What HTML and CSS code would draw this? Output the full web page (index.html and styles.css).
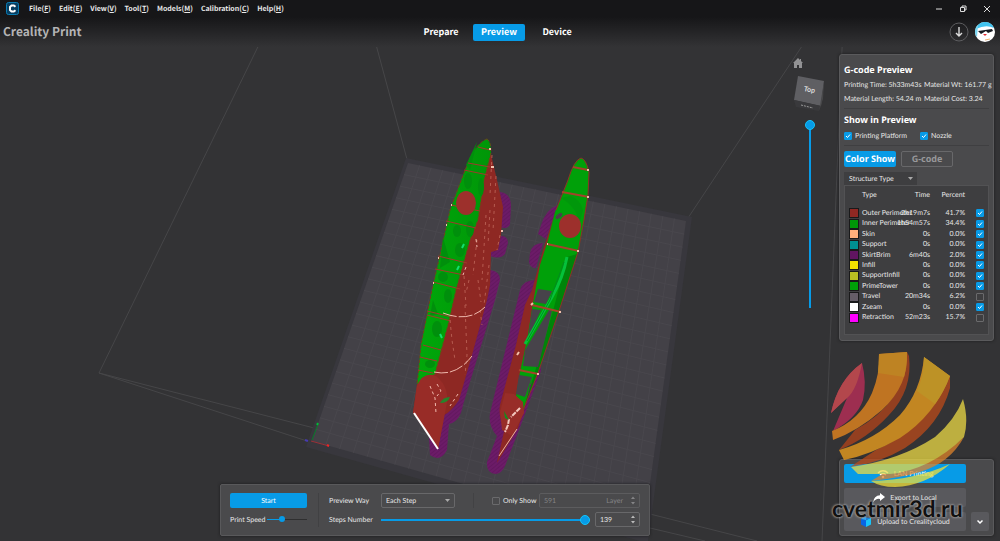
FILE: index.html
```html
<!DOCTYPE html>
<html lang="en">
<head>
<meta charset="utf-8">
<title>Creality Print</title>
<link rel="stylesheet" href="styles.css">
</head>
<body>
<svg class="scene" viewBox="0 0 1000 541" preserveAspectRatio="xMidYMid slice" aria-hidden="true">
  <defs>
    <pattern id="brim" width="3" height="3" patternUnits="userSpaceOnUse" patternTransform="rotate(-40)">
      <rect width="3" height="3" fill="#6c1b68"/><rect width="3" height="1" fill="#63185f"/>
    </pattern>
    <linearGradient id="hullA" x1="0" y1="0" x2="1" y2="0"><stop offset="0" stop-color="#00a80a"/><stop offset="1" stop-color="#009608"/></linearGradient>
  </defs>
  <g fill="none" stroke="#464648">
    <path d="M271 20L99 373L307 441M99 373L318 429M368 15L408 163M816 25L686 221M843 25L822 541M650 514L757 541M650 528L705 541"/>
  </g>
  <path d="M406 158L692 217L648 541H640L306 447Z" fill="#38373d"/>
  <path d="M408 163L686 221L643 535L312 441Z" fill="#434147"/>
  <path id="grid" stroke="#49474d" fill="none"/>
  <path d="M312 440L318 424" stroke="#087b2b"/><path d="M311 441L329 446" stroke="#9b3038"/>
  <path d="M327 445l2 1" stroke="#f02525" stroke-width="2"/><path d="M317 425l1-2" stroke="#00ba37" stroke-width="2"/><path d="M305 440l3 1" stroke="#463ab0" stroke-width="2"/>

  <g fill="url(#brim)">
    <path d="M500 192Q511 193 511 206L510 224Q508 230 500 227ZM496 236Q508 234 508 243L505 254Q500 260 490 256Z"/>
    <path d="M490 270Q500 271 500 280L495 300L463 405Q460 422 449 424L447 450Q440 463 430 455L429 438Z"/>
    <path d="M558 205Q546 209 541 225L538 234L546 239ZM543 243Q532 243 530 253L529 262Q530 268 536 268ZM535 280Q523 280 520 290L490 413Q488 426 497 436L487 462Q486 474 496 474Q502 473 505 466L519 430L541 371Z"/>
  </g>

  <path d="M489 146L497 180L503 207L501 235L498 250L491 252L490 285L487 300L472 355L459 400Q450 413 444 415L438 449L413 413L417 384L435 330Z" fill="#8e2823"/>
  <path d="M487 139Q478 142 470 158L462 178L450 210L440 255L432 290L428 310L421 345L418 376L417 384L435 374L448 325L456 290L470 240L478 220L484 180L491 153Q491 141 487 139Z" fill="url(#hullA)" stroke="#6b4a15" stroke-dasharray="3 2"/>
  <path d="M413 413L417 386Q423 371 436 376Q451 388 446 408L438 449Z" fill="#982c27"/>
  <g fill="#008f0c">
    <ellipse cx="468" cy="181" rx="4" ry="8"/><ellipse cx="481" cy="187" rx="3" ry="9"/><ellipse cx="457" cy="231" rx="4" ry="6"/><ellipse cx="470" cy="229" rx="4" ry="8"/><ellipse cx="460" cy="250" rx="5" ry="7"/><ellipse cx="443" cy="277" rx="5" ry="5"/><ellipse cx="448" cy="296" rx="4" ry="7"/><ellipse cx="437" cy="329" rx="5" ry="8"/><ellipse cx="430" cy="364" rx="5" ry="4"/>
    <path d="M477 142L470 170L466 165ZM443 237L450 262L440 268ZM433 300L438 314L430 316Z"/>
  </g>
  <path d="M478 147l12 3M468 163l22 4M464 170l24 5M451 205l29 6M446 221l30 7M438 256l29 7M435 269l29 6M433 282l27 7M427 311l25 6M427 315l24 6M423 345l18 5M420 357l17 4M418 370l15 3" stroke="#a0392c" fill="none"/>
  <path d="M492 155l-2 40M496 176l-3 55M490 210l-2 35M477 240l-4 35M486 215l-4 65M500 235l-3 15M469 280l-3 13M464 276l2 30M489 265l-5 40M478 280l3 22M450 320l2 20 3 20M465 305l2 50-2 20M480 310l2 15" stroke="#b65b50" stroke-dasharray="3 4" fill="none"/>
  <g fill="none" stroke="#efb9ad">
    <path d="M443 313Q469 323 485 307M434 372Q456 377 472 356" stroke-dasharray="14 2"/>
    <path d="M458 394l-8 12M430 386l5 12 1 15M437 384l4 7-4 5M476 239l1 8M466 267l-3 8" stroke-dasharray="3 3"/>
  </g>
  <path d="M414 413L438 449" stroke="#fff" stroke-width="2"/>
  <path d="M440 403q3-6 10-6q-2 6-10 6" fill="#26842b"/>
  <path d="M462 248l2-4M457 270l2-4M440 334l2 4" stroke="#13df6f" stroke-width="2"/>
  <ellipse cx="466" cy="203" rx="10" ry="12" fill="#9d302c"/>

  <path d="M566 190L557 207L543 250L532 290L525 305L516 345L500 405Q498 418 505 427L497 463L518 428L526 404L538 330L563 230Z" fill="#8e2823"/>
  <path d="M581 158Q574 160 568 180L562 195L555 212L548 240L540 265L533 303L527 340L520 372L516 396L524 409L530 385L538 372L550 335L560 305L567 285L578 252L584 220L588 195L589 172Q586 159 581 158Z" fill="#00a009"/>
  <path d="M567 257L577 254L561 304L538 373L524 408L531 385L553 311Z" fill="#008409"/>
  <path d="M524 408L538 373L561 305L578 252L584 220L588 195L589 172Q586 159 581 158Q574 160 568 180L556 210" fill="none" stroke="#8c3324"/>
  <path d="M538 289L552 291L546 304L534 302ZM532 309L541 310L528 338ZM549 310L552 311L538 367L523 366L525 350ZM519 375L532 377L525 397L516 394Z" fill="#47434a"/>
  <path d="M567 257Q563 278 552 297L525 344" fill="none" stroke="#05c13b" stroke-width="3"/><path d="M564 262L550 300L527 341" fill="none" stroke="#018d20"/>
  <path d="M573 167l15 3M562 192l27 5M547 244l32 7M532 305l29 7M519 370l19 4" stroke="#a3432b" stroke-width="2" fill="none"/>
  <path d="M587 170h2M587 197h2M577 251h2M559 312h2M537 374h2M547 244h1M531 305l2-2M501 231h2M517 355l2-3M489 149h2M491 167h3M451 205h1M446 225h1M438 258h1M433 283h1" stroke="#f2c1ad" stroke-width="2"/>
  <path d="M500 412L505 393L514 394L523 402L524 413L512 436L502 430Z" fill="#982d28"/>
  <path d="M517 429L499 456" stroke="#e9b2a5"/>
  <path d="M520 408l-9 9M509 419l-1 6-3 7" fill="none" stroke="#f3c7bd" stroke-dasharray="5 1" stroke-width="2"/>
  <path d="M504 411l5 9-4-2z" fill="#168b1d"/>
  <path d="M570 196q10 3 13 14l-4 14q-1-16-18-26z" fill="#00970b"/>
  <ellipse cx="559" cy="216" rx="2" ry="4" transform="rotate(50 559 216)" fill="#494348"/>
  <ellipse cx="570" cy="226" rx="11" ry="12" fill="#9d302c"/>
</svg>

<header class="header">
  <div class="menubar">
    <svg class="logo" viewBox="0 0 13 13" aria-hidden="true"><rect x=".5" y=".5" width="12" height="12" rx="2" fill="#063e61" stroke="#0a7db4"/><path d="M9.500 4.800L7.800 3.500H5.500L4 5v3l1.500 1.500h2.300l1.700-1.300" fill="none" stroke="#fff" stroke-width="2"/></svg>
    <nav class="menus">
      <a href="#">File(<u>F</u>)</a><a href="#">Edit(<u>E</u>)</a><a href="#">View(<u>V</u>)</a><a href="#">Tool(<u>T</u>)</a><a href="#">Models(<u>M</u>)</a><a href="#">Calibration(<u>C</u>)</a><a href="#">Help(<u>H</u>)</a>
    </nav>
    <div class="window-buttons">
      <button aria-label="Minimize"><svg viewBox="0 0 8 8"><path d="M1 4h6"/></svg></button>
      <button aria-label="Restore"><svg viewBox="0 0 8 8"><path d="M1.500 2.500h4v4h-4zM3 2V1h4v4H6"/></svg></button>
      <button aria-label="Close"><svg viewBox="0 0 8 8"><path d="M1 1l6 6M7 1L1 7"/></svg></button>
    </div>
  </div>
  <div class="toolbar">
    <h1>Creality Print</h1>
    <nav class="tabs"><button>Prepare</button><button class="active">Preview</button><button>Device</button></nav>
    <div class="account">
      <button class="download" aria-label="Downloads"><svg viewBox="0 0 20 20"><circle cx="10" cy="10" r="9" stroke="#5d5d60"/><path d="M10 5v9M7 11l3 3 3-3" stroke="#ddd" stroke-width="1.400"/></svg></button>
      <button aria-label="Account"><svg viewBox="0 0 20 20"><circle cx="10" cy="10" r="10" fill="#fff"/><path d="M1 7A9.500 9.500 0 0 1 19 6Q11 2 1 7" fill="#42c3ee"/><path d="M0 10Q0 5 3 3L2 15Q0 13 0 10" fill="#79d6f2"/><path d="M3 9l14-2 1 2-5 2-2-2-5 3z" fill="#161a20"/><path d="M8 12h4l-2 2z" fill="#e32a31"/><path d="M10 18l5-1" stroke="#efb273"/></svg></button>
    </div>
  </div>
</header>

<main class="workspace">
  <section class="playback" aria-label="Playback">
    <div class="play-group">
      <button class="primary start">Start</button>
      <div class="speed"><label for="speed">Print Speed</label><input id="speed" class="range small" type="range" value="33"></div>
    </div>
    <div class="step-group">
      <div class="play-row">
        <label class="row-label" for="way">Preview Way</label>
        <select id="way" class="way"><option>Each Step</option></select>
        <span class="separator"></span>
        <label class="check only"><input type="checkbox">Only Show</label>
        <label class="number disabled"><input type="text" value="591" aria-label="Layer number" disabled><span>Layer</span><svg viewBox="0 0 5 10"><path d="M0 3l2.500-3L5 3zM0 7h5l-2.500 3z"/></svg></label>
      </div>
      <div class="play-row">
        <label class="row-label" for="steps">Steps Number</label>
        <input id="steps" class="range steps" type="range" value="100">
        <label class="number count"><input type="text" value="139" aria-label="Step"><svg viewBox="0 0 5 10"><path d="M0 3l2.500-3L5 3zM0 7h5l-2.500 3z"/></svg></label>
      </div>
    </div>
  </section>

  <div class="view-tools">
    <button class="home" aria-label="Home view"><svg viewBox="0 0 10 10"><path d="M5 0L0 5h1v5h3V7h2v3h3V5h1L8 3V1H7v1z" fill="#929294"/></svg></button>
    <svg class="cube" viewBox="0 0 34 38" role="img" aria-label="View cube">
      <path d="M5 2L31 7L28 32L1 26Z" fill="#5f5f63"/><path d="M1 26L28 32L26 37L3 33Z" fill="#39393c"/><path d="M31 7L27 32L26 37L30 25Z" fill="#474749"/>
      <text x="16" y="18" transform="rotate(10 16 18)">Top</text><path d="M8 31l12 3" stroke="#999" stroke-dasharray="2 1"/>
    </svg>
    <input class="layer-range" type="range" value="100" aria-label="Layer">
  </div>

  <aside class="sidebar">
    <section class="panel info">
      <div class="block">
        <h2>G-code Preview</h2>
        <div class="facts"><div>Printing Time: 5h33m43s</div><div>Material Wt: 161.77 g</div><div>Material Length: 54.24 m</div><div>Material Cost: 3.24</div></div>
      </div>
      <div class="block show">
        <h2>Show in Preview</h2>
        <div class="options"><label class="check"><input type="checkbox" checked>Printing Platform</label><label class="check"><input type="checkbox" checked>Nozzle</label></div>
      </div>
      <div class="modes"><button class="primary">Color Show</button><button class="outline">G-code</button></div>
      <select class="structure" aria-label="Color by"><option>Structure Type</option></select>
      <div class="legend">
        <table>
          <thead><tr><th class="c-swatch"></th><th class="c-type">Type</th><th class="c-time">Time</th><th class="c-percent">Percent</th><th></th></tr></thead>
          <tbody>
            <tr><td><i class="swatch outer"></i></td><td>Outer Perimeter</td><td>2h19m7s</td><td>41.7%</td><td><input type="checkbox" aria-label="Outer Perimeter" checked></td></tr>
            <tr><td><i class="swatch inner"></i></td><td>Inner Perimeter</td><td>1h54m57s</td><td>34.4%</td><td><input type="checkbox" aria-label="Inner Perimeter" checked></td></tr>
            <tr><td><i class="swatch skin"></i></td><td>Skin</td><td>0s</td><td>0.0%</td><td><input type="checkbox" aria-label="Skin" checked></td></tr>
            <tr><td><i class="swatch support"></i></td><td>Support</td><td>0s</td><td>0.0%</td><td><input type="checkbox" aria-label="Support" checked></td></tr>
            <tr><td><i class="swatch brim"></i></td><td>SkirtBrim</td><td>6m40s</td><td>2.0%</td><td><input type="checkbox" aria-label="SkirtBrim" checked></td></tr>
            <tr><td><i class="swatch infill"></i></td><td>Infill</td><td>0s</td><td>0.0%</td><td><input type="checkbox" aria-label="Infill" checked></td></tr>
            <tr><td><i class="swatch support-infill"></i></td><td>SupportInfill</td><td>0s</td><td>0.0%</td><td><input type="checkbox" aria-label="SupportInfill" checked></td></tr>
            <tr><td><i class="swatch tower"></i></td><td>PrimeTower</td><td>0s</td><td>0.0%</td><td><input type="checkbox" aria-label="PrimeTower" checked></td></tr>
            <tr><td><i class="swatch travel"></i></td><td>Travel</td><td>20m34s</td><td>6.2%</td><td><input type="checkbox" aria-label="Travel"></td></tr>
            <tr><td><i class="swatch zseam"></i></td><td>Zseam</td><td>0s</td><td>0.0%</td><td><input type="checkbox" aria-label="Zseam" checked></td></tr>
            <tr><td><i class="swatch retraction"></i></td><td>Retraction</td><td>52m23s</td><td>15.7%</td><td><input type="checkbox" aria-label="Retraction"></td></tr>
          </tbody>
        </table>
      </div>
    </section>

    <section class="panel actions">
      <div class="action-list">
        <button class="primary"><svg class="wifi" viewBox="0 0 12 9"><path d="M1 3.500Q6-1 11 3.500M3 5.500q3-2.500 6 0" fill="none" stroke="#fff" stroke-width="1.500"/><circle cx="6" cy="7.500" r="1.300" fill="#fff"/></svg>LAN Printing</button>
        <button><svg viewBox="0 0 12 10"><path d="M7 0l5 4-5 4V6Q3 5 0 9.500Q1 2.500 7 2.300Z" fill="#fff"/></svg>Export to Local</button>
        <button><svg viewBox="0 0 12 12"><path d="M0 2l6 2v8L0 9z" fill="#0865e5"/><path d="M6 4l6-3v8l-6 3z" fill="#18c4fa"/><path d="M0 2l5-2 2 1-1 3z" fill="#28a5fb"/><path d="M7 1l5 0-6 3z" fill="#1380ec"/></svg>Upload to Crealitycloud</button>
      </div>
      <button class="more" aria-label="More"><svg viewBox="0 0 6 6"><path d="M.5 1.500L3 4l2.500-2.500" fill="none" stroke="#fff" stroke-width="1.500"/></svg></button>
    </section>

    <div class="watermark">
      <svg viewBox="830 350 138 140" aria-hidden="true">
        <path d="M862 363Q838 380 831 413L847 398L833 431Q857 418 863 400Q867 382 862 363Z" fill="#c22d5a"/><path d="M862 363Q838 380 831 413L847 398Q857 390 862 363Z" fill="#e04e54"/>
        <path d="M907 352L909 356Q913 390 889 415Q867 439 839 450L855 430Q906 402 907 352Z" fill="#b5441a"/>
        <path d="M879 354L907 352Q909 385 882 410Q858 431 833 440L832 431Q860 420 872 393Q880 374 879 354Z" fill="#f08b1c"/><path d="M879 354L907 352Q907 366 904 377L878 373Z" fill="#efa01d"/>
        <path d="M950 376V388Q940 425 905 448Q880 463 850 467L876 450Q931 425 950 376Z" fill="#bd4b19"/>
        <path d="M924 357L950 376Q935 415 900 438Q870 455 844 460L839 450Q875 440 900 415Q921 391 924 357Z" fill="#f5a31c"/><path d="M924 357L950 376Q944 392 935 404L917 391Q924 376 924 357Z" fill="#eeb322"/>
        <path d="M964 437Q950 463 920 472Q900 478 871 481L889 470Q938 460 964 437Z" fill="#e0832a"/>
        <path d="M963 399Q969 420 964 437Q930 470 890 474H858L851 467Q900 460 935 437Q955 420 963 399Z" fill="#eddb44"/>
        <path d="M950 464Q925 486 895 487Q880 487 871 481Q915 480 950 464Z" fill="#f0df38"/>
      </svg>
      <span>cvetmir3d.ru</span>
    </div>
  </aside>
</main>
<script src="grid.js"></script>
</body>
</html>
```
FILE: styles.css
```css
* { box-sizing: border-box; }
body {
  margin: 0;
  min-height: 100vh;
  display: flex;
  flex-direction: column;
  position: relative;
  background: #333335;
  color: #e8e8e8;
  font: 7px/10px Lato, "Noto Sans", sans-serif;
  text-rendering: geometricPrecision;
}
button, input, select { font: inherit; color: inherit; margin: 0; text-rendering: inherit; }
button { border: 0; padding: 0; background: none; display: flex; align-items: center; justify-content: center; }
label, button, td, th, option { white-space: nowrap; }
svg { display: block; }
.scene { position: absolute; inset: 0; width: 100%; height: 100%; }

.header { position: relative; background: linear-gradient(#161618 17px, #333335); font-family: "Noto Sans CJK SC", "Noto Sans", sans-serif; }
.menubar { display: flex; align-items: center; height: 17px; padding: 0 9px 0 6px; }
.logo { width: 13px; height: 13px; }
.menus { display: flex; gap: 8px; margin-left: 10px; font-weight: 700; }
.menus a { color: #e8e8e8; text-decoration: none; }
.window-buttons { display: flex; gap: 16px; margin-left: auto; }
.window-buttons svg { width: 8px; height: 8px; fill: none; stroke: #ddd; }
.toolbar { display: grid; grid-template-columns: 1fr auto 1fr; align-items: center; height: 30px; padding: 0 5px 0 3px; }
h1 { margin: 0; font-size: 12px; line-height: 16px; font-weight: 700; color: #b4b4b5; }
.tabs { display: flex; gap: 7px; font-size: 9px; font-weight: 700; }
.tabs button { width: 50px; height: 17px; border-radius: 2px; color: #fff; }
.tabs .active { width: 52px; background: #079be7; }
.account { display: flex; justify-content: flex-end; gap: 6px; }
.account svg { width: 20px; height: 20px; }
.download svg { fill: none; }

.workspace { position: relative; flex: 1; display: flex; padding: 7px 6px 5px 22%; }
.playback {
  align-self: flex-end;
  flex: 0 1 430px;
  display: flex;
  padding: 8px 9px;
  background: #4a4a4c;
  border: 1px solid #59595b;
  border-radius: 2px;
  box-shadow: 0 0 3px #1c1c1d;
}
.primary { background: #079be7; color: #fff; border-radius: 2px; }
.play-group { width: 89px; padding-right: 11px; border-right: 1px solid #414143; }
.start { width: 100%; height: 15px; }
.speed { display: flex; align-items: center; gap: 2px; height: 23px; margin-bottom: -4px; }
.speed input { flex: 1; min-width: 0; }
.step-group { flex: 1; display: grid; gap: 4px; padding-left: 10px; min-width: 0; }
.play-row { display: flex; align-items: center; height: 15px; }
.row-label { flex: none; width: 52px; }
.way, .number { height: 15px; border: 1px solid #68686a; border-radius: 2px; }
.way, .structure {
  appearance: none;
  background: url("data:image/svg+xml,%3Csvg xmlns='http://www.w3.org/2000/svg' viewBox='0 0 5 3'%3E%3Cpath d='M0 0h5L2.500 3z' fill='%23aaa'/%3E%3C/svg%3E") calc(100% - 4px) 50% / 5px 3px no-repeat;
}
.way { width: 74px; padding: 0 4px; }
.separator { height: 15px; border-left: 1px solid #424244; margin: 0 18px; }
.check { display: flex; align-items: center; gap: 3px; }
.only { flex: none; width: 43px; }
input[type="checkbox"] { appearance: none; flex: none; width: 8px; height: 8px; border: 1px solid #6a6a6c; border-radius: 1px; }
input[type="checkbox"]:checked {
  border-color: #079be7;
  background: #079be7 url("data:image/svg+xml,%3Csvg xmlns='http://www.w3.org/2000/svg' viewBox='0 0 8 8'%3E%3Cpath d='M2 4l1.500 1.500L6 2.500' fill='none' stroke='white'/%3E%3C/svg%3E") center / 8px 8px;
}
.number { display: flex; align-items: center; flex: 1; margin-left: 4px; padding: 0 4px; }
.number input { flex: 1; min-width: 0; width: 10px; padding: 0; border: 0; background: none; }
.number svg { width: 4px; height: 9px; fill: #bbb; }
.number span { margin-right: 8px; }
.disabled { color: #858587; border-color: #5c5c5e; }
.disabled svg { fill: #858587; }
.count { flex: 0 0 45px; margin-left: 5px; }
.range { appearance: none; height: 10px; background: none; }
.range::-webkit-slider-runnable-track { height: 2px; background: #079be7; }
.range::-webkit-slider-thumb { appearance: none; width: 10px; height: 10px; margin-top: -4px; border-radius: 50%; background: #079be7; border: 1px solid #12c4fa; }
.small::-webkit-slider-runnable-track { height: 1px; background: linear-gradient(90deg, #079be7 35%, #2f2f30 35%); }
.small::-webkit-slider-thumb { width: 6px; height: 6px; margin-top: -3px; border: 0; }
.steps { flex: 1; min-width: 0; }

.view-tools { width: 54px; margin-left: auto; padding: 4px 8px 0 4px; display: flex; flex-direction: column; align-items: center; }
.home { align-self: flex-start; margin-left: 4px; }
.home svg { width: 10px; height: 10px; }
.cube { width: 34px; height: 38px; margin: 6px 0 8px; }
.cube text { font-size: 7px; font-weight: 700; fill: #ddd; text-anchor: middle; }
.layer-range { appearance: none; writing-mode: vertical-lr; direction: rtl; width: 10px; height: 188px; background: none; }
.layer-range::-webkit-slider-runnable-track { width: 2px; height: 100%; background: #079be7; }
.layer-range::-webkit-slider-thumb { appearance: none; width: 10px; height: 10px; margin-left: -4px; border-radius: 50%; background: #079be7; border: 1px solid #12c4fa; }

.sidebar { position: relative; flex: 0 0 155px; min-width: 0; display: flex; flex-direction: column; justify-content: space-between; }
.panel { background: #4a4a4c; border: 1px solid #5a5a5c; border-radius: 3px; box-shadow: 0 0 3px #1c1c1d; }
.info { padding: 9px 4px 5px; }
.block { padding-bottom: 4px; border-bottom: 1px solid #3f3f41; }
h2 { margin: 0; font: 700 9px/12px "Noto Sans", sans-serif; color: #fff; }
.facts { display: grid; grid-template-columns: 80px 1fr; row-gap: 4px; margin: 4px 0 0; white-space: nowrap; }
.show { padding-top: 5px; }
.options { display: grid; grid-template-columns: 76px 1fr; margin-top: 5px; }
.modes { display: flex; gap: 5px; margin: 5px 0; font: 700 9px/12px "Noto Sans", sans-serif; }
.modes button { width: 52px; height: 16px; }
.outline { border: 1px solid #68686a; border-radius: 2px; color: #98989a; }
.structure { display: block; width: 73px; height: 13px; padding: 0 5px; border: 0; background-color: #3e3e40; }
.legend { padding: 5px 4px 11px; background: #3e3e40; border: 1px solid #525254; }
table { width: 100%; height: 132px; table-layout: fixed; border-collapse: collapse; }
th, td { padding: 0; line-height: 9px; font-weight: 400; text-align: right; }
th { height: 17px; vertical-align: top; }
th:nth-child(2), td:nth-child(2) { text-align: left; }
.c-swatch { width: 13px; }
.c-type { width: 35px; }
.c-time { width: 33px; }
.c-percent { width: 35px; }
td input { display: block; margin-left: auto; }
.swatch { display: block; width: 10px; height: 10px; border: 1px solid #19191a; }
.outer { background: #8f2823; } .inner { background: #009708; } .skin { background: #ffaf7c; }
.support { background: #008f91; } .brim { background: #611560; } .infill { background: #f0e000; }
.support-infill { background: #b9bf22; } .tower { background: #00a008; } .travel { background: #655d67; }
.zseam { background: #fff; } .retraction { background: #ff00ff; }

.actions { display: flex; align-items: flex-end; justify-content: space-between; padding: 4px; }
.action-list { display: grid; gap: 5px; width: 122px; }
.action-list button, .more { height: 19px; border-radius: 2px; }
.action-list button { gap: 5px; }
.action-list button:not(.primary), .more { background: #59595d; }
.action-list svg { width: 12px; height: 10px; }
.more { width: 18px; }
.more svg { width: 6px; height: 6px; }
.watermark { position: absolute; left: -9px; right: 16px; bottom: 16px; pointer-events: none; }
.watermark svg { width: 138px; height: 140px; opacity: .74; }
.watermark span { display: block; margin: 6px 0 0 2px; font: 700 23px/24px Lato, sans-serif; color: #111; text-shadow: 0 0 2px #bbb, 0 0 3px #aaa; }
```
FILE: grid.js
```js
// Draws the bed grid between the four corners of the build plate.
const corners = [[408, 163], [686, 221], [643, 535], [312, 441]];
const cells = 24;
const mix = (a, b, t) => [a[0] + (b[0] - a[0]) * t, a[1] + (b[1] - a[1]) * t];
let d = "";
for (let i = 1; i < cells; i++) {
  const t = i / cells;
  const [tl, tr, br, bl] = corners;
  d += `M${mix(tl, tr, t)}L${mix(bl, br, t)}M${mix(tl, bl, t)}L${mix(tr, br, t)}`;
}
document.getElementById("grid").setAttribute("d", d);
```
